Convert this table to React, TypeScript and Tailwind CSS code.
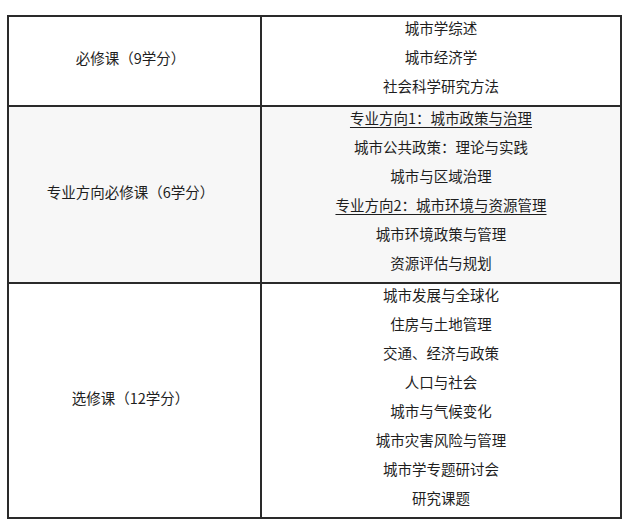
const rows: { label: string; items: { text: string; heading?: boolean }[]; shaded?: boolean }[] = [
  {
    label: '必修课（9学分）',
    items: [{ text: '城市学综述' }, { text: '城市经济学' }, { text: '社会科学研究方法' }],
  },
  {
    label: '专业方向必修课（6学分）',
    shaded: true,
    items: [
      { text: '专业方向1：城市政策与治理', heading: true },
      { text: '城市公共政策：理论与实践' },
      { text: '城市与区域治理' },
      { text: '专业方向2：城市环境与资源管理', heading: true },
      { text: '城市环境政策与管理' },
      { text: '资源评估与规划' },
    ],
  },
  {
    label: '选修课（12学分）',
    items: [
      { text: '城市发展与全球化' },
      { text: '住房与土地管理' },
      { text: '交通、经济与政策' },
      { text: '人口与社会' },
      { text: '城市与气候变化' },
      { text: '城市灾害风险与管理' },
      { text: '城市学专题研讨会' },
      { text: '研究课题' },
    ],
  },
];

export default function App() {
  return (
    <div
      className="w-[640px] h-[527px] bg-white pt-[15px] pl-[7px] text-[#1e1e1e] text-[14.5px]"
      style={{ fontFamily: '"Noto Sans CJK SC", "Noto Sans", sans-serif' }}
    >
      <div className="w-[615px] border-2 border-[#2a2a2a]">
        {rows.map((row, i) => (
          <div
            key={row.label}
            className={`grid grid-cols-[251px_1fr] ${i > 0 ? 'border-t-2 border-[#2a2a2a]' : ''} ${
              row.shaded ? 'bg-[#f7f7f7]' : 'bg-white'
            }`}
          >
            <div className="flex items-center justify-center pb-[6px] pr-[8px]">{row.label}</div>
            <div className="border-l-2 border-[#2a2a2a] flex flex-col items-center pb-[1px]">
              {row.items.map((item) => (
                <div key={item.text} className="h-[29px] leading-[21px]">
                  <span className={item.heading ? 'underline underline-offset-[3px] decoration-1' : ''}>
                    {item.text}
                  </span>
                </div>
              ))}
            </div>
          </div>
        ))}
      </div>
    </div>
  );
}
